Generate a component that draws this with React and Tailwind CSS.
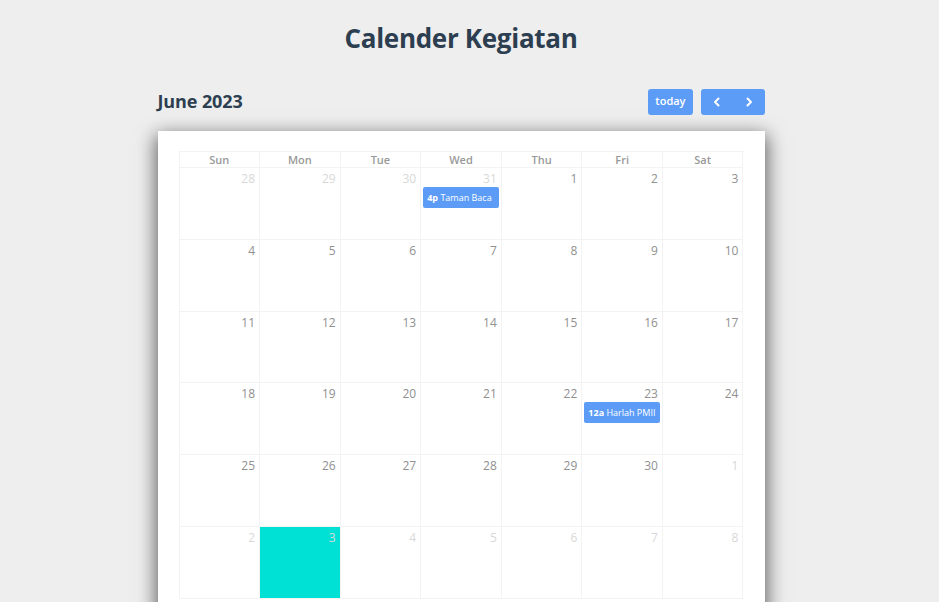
import React from 'react';

const weeks = [
    [28, 29, 30, 31, 1, 2, 3],
    [4, 5, 6, 7, 8, 9, 10],
    [11, 12, 13, 14, 15, 16, 17],
    [18, 19, 20, 21, 22, 23, 24],
    [25, 26, 27, 28, 29, 30, 1],
    [2, 3, 4, 5, 6, 7, 8],
];

const days = ['Sun', 'Mon', 'Tue', 'Wed', 'Thu', 'Fri', 'Sat'];

const events = {
    '0-3': { time: '4p', title: 'Taman Baca' },
    '3-5': { time: '12a', title: 'Harlah PMII' },
};

const isOther = (w, d) => (w === 0 && d < 4) || (w === 4 && d === 6) || w === 5;

const ChevronLeft = () => (
    <svg width="12" height="12" viewBox="0 0 12 12" fill="none" stroke="white" strokeWidth="2" strokeLinecap="round" strokeLinejoin="round">
        <path d="M7.5 2.5 4 6l3.5 3.5" />
    </svg>
);

const ChevronRight = () => (
    <svg width="12" height="12" viewBox="0 0 12 12" fill="none" stroke="white" strokeWidth="2" strokeLinecap="round" strokeLinejoin="round">
        <path d="M4.5 2.5 8 6l-3.5 3.5" />
    </svg>
);

export default function App() {
    return (
        <div className="min-h-screen bg-[#eeeeee] overflow-hidden" style={{ fontFamily: '"Open Sans", "Noto Sans", sans-serif' }}>
            <div className="w-[922px] flex flex-col items-center">
                <h1 className="mt-[20px] text-[26px] leading-[36px] font-bold text-[#2c3e50] tracking-[-0.3px]">Calender Kegiatan</h1>

                <div className="w-[607px] mt-[32px]">
                    <div className="flex items-center justify-between h-[27px]">
                        <h2 className="text-[18px] font-bold text-[#2c3e50] tracking-[-0.1px]">June 2023</h2>
                        <div className="flex gap-[8px]">
                            <button className="h-[26px] px-[7px] rounded-[3px] bg-[#5c9cf7] text-white text-[11px] font-semibold">today</button>
                            <div className="flex rounded-[3px] bg-[#5c9cf7] h-[26px]">
                                <button className="w-[32px] flex items-center justify-center"><ChevronLeft /></button>
                                <button className="w-[32px] flex items-center justify-center"><ChevronRight /></button>
                            </div>
                        </div>
                    </div>

                    <div className="mt-[16px] bg-white shadow-[0_6px_18px_2px_rgba(0,0,0,0.6)] px-[21px] pt-[20px] pb-[20px]">
                        <div className="border-l border-t border-[#f3f3f3]">
                            <div className="grid grid-cols-7">
                                {days.map(d => (
                                    <div key={d} className="h-[16px] border-r border-b border-[#f3f3f3] text-center text-[11px] leading-[15px] font-semibold text-[#999]">{d}</div>
                                ))}
                            </div>
                            {weeks.map((week, w) => (
                                <div key={w} className="grid grid-cols-7">
                                    {week.map((n, d) => {
                                        const ev = events[`${w}-${d}`];
                                        const today = w === 5 && d === 1;
                                        return (
                                            <div key={d} className={`h-[71.8px] border-r border-b border-[#f3f3f3] flex flex-col ${today ? 'bg-[#00e1d5]' : ''}`}>
                                                <div className={`text-right pr-[4px] pt-[3px] text-[12px] leading-[16px] ${isOther(w, d) ? 'text-[#d8d8d8]' : 'text-[#909090]'}`}>{n}</div>
                                                {ev && (
                                                    <div className="mx-[2px] mt-0 h-[21px] rounded-[2px] bg-[#5c9cf7] text-white text-[9px] leading-[21px] pl-[4px] whitespace-nowrap overflow-hidden">
                                                        <span className="font-bold">{ev.time}</span> {ev.title}
                                                    </div>
                                                )}
                                            </div>
                                        );
                                    })}
                                </div>
                            ))}
                        </div>
                    </div>
                </div>
            </div>
        </div>
    );
}
